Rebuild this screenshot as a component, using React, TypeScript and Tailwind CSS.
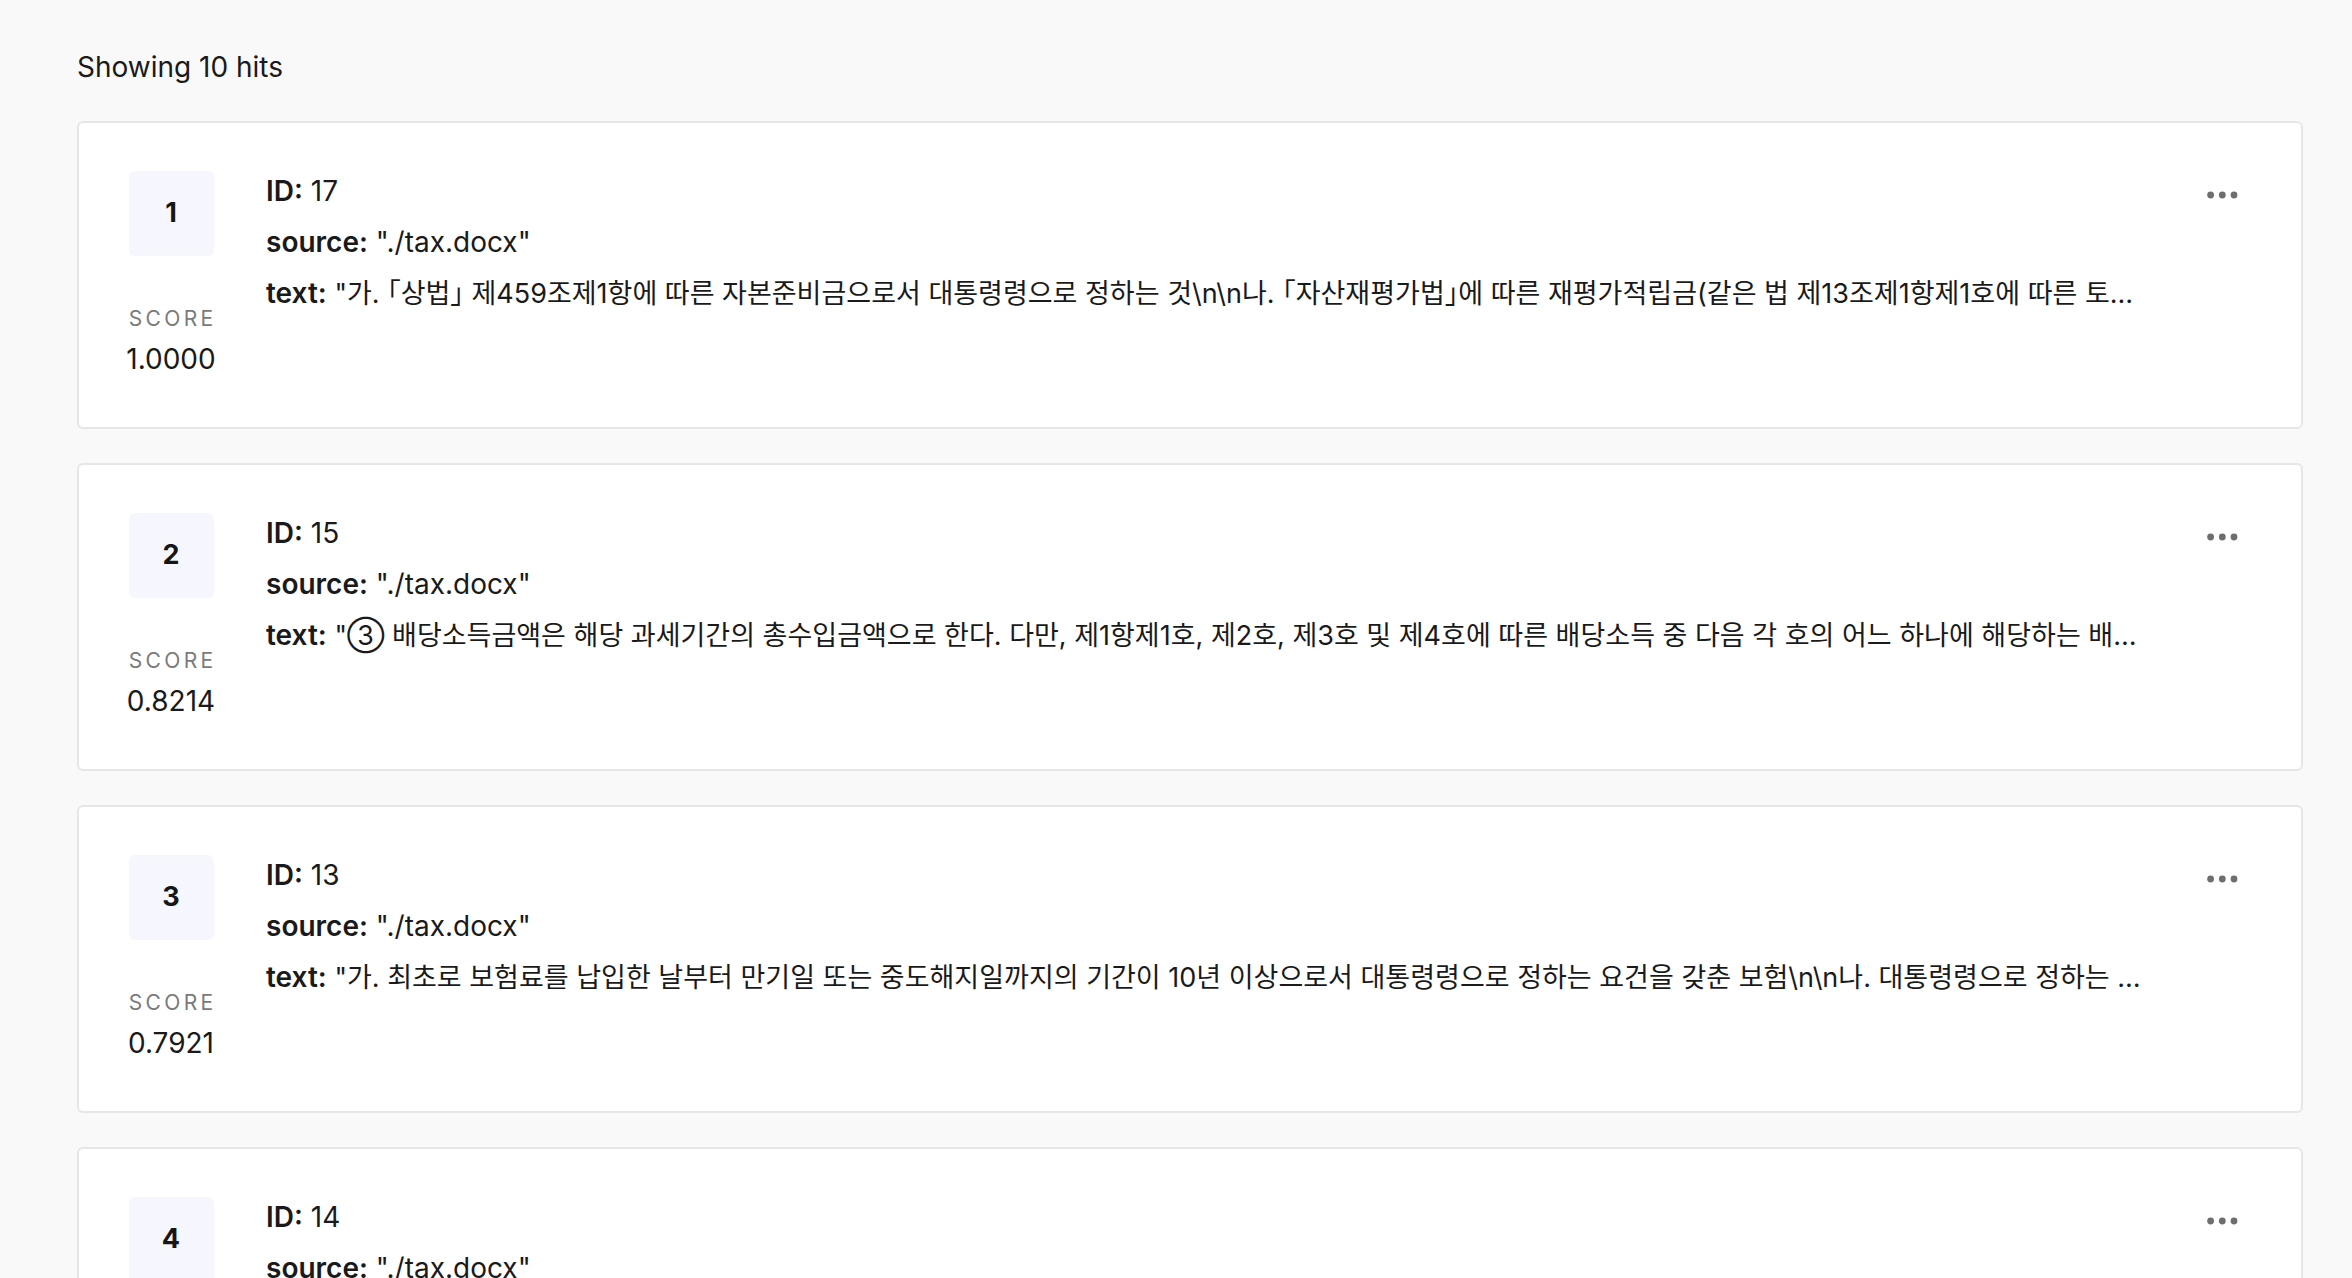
import React from 'react'

type Hit = {
  id: number
  source: string
  text: string
  score: number
}

const hits: Hit[] = [
  {
    id: 17,
    source: './tax.docx',
    text: '가. 「상법」 제459조제1항에 따른 자본준비금으로서 대통령령으로 정하는 것\\n\\n나. 「자산재평가법」에 따른 재평가적립금(같은 법 제13조제1항제1호에 따른 토지의 재평가차액에 상당하는 금액은 제외한다)',
    score: 1.0,
  },
  {
    id: 15,
    source: './tax.docx',
    text: '③ 배당소득금액은 해당 과세기간의 총수입금액으로 한다. 다만, 제1항제1호, 제2호, 제3호 및 제4호에 따른 배당소득 중 다음 각 호의 어느 하나에 해당하는 배당을 제외한 배당소득에 대해서는 해당 과세기간의 총수입금액에 그 배당소득의 100분의 10을 더한 금액으로 한다.',
    score: 0.8214,
  },
  {
    id: 13,
    source: './tax.docx',
    text: '가. 최초로 보험료를 납입한 날부터 만기일 또는 중도해지일까지의 기간이 10년 이상으로서 대통령령으로 정하는 요건을 갖춘 보험\\n\\n나. 대통령령으로 정하는 요건을 갖춘 종신형 연금보험',
    score: 0.7921,
  },
  {
    id: 14,
    source: './tax.docx',
    text: '① 이자소득은 해당 과세기간에 발생한 다음 각 호의 소득으로 한다.\\n\\n1. 국가나 지방자치단체가 발행한 채권 또는 증권의 이자와 할인액\\n\\n2. 내국법인이 발행한 채권 또는 증권의 이자와 할인액',
    score: 0.7736,
  },
  {
    id: 16,
    source: './tax.docx',
    text: '① 배당소득은 해당 과세기간에 발생한 다음 각 호의 소득으로 한다.\\n\\n1. 내국법인으로부터 받는 이익이나 잉여금의 배당 또는 분배금',
    score: 0.7512,
  },
  {
    id: 12,
    source: './tax.docx',
    text: '다. 대통령령으로 정하는 요건을 갖춘 종신형 연금보험 계약으로서 계약자가 보험료 납입 계약기간 만료 후 55세 이후부터 사망시까지 보험금ㆍ수익 등을 연금으로 지급받는 계약',
    score: 0.7288,
  },
  {
    id: 18,
    source: './tax.docx',
    text: '② 제1항제2호에 따른 의제배당(擬制配當)이란 다음 각 호의 금액을 말하며, 이를 해당 주주, 사원, 그 밖의 출자자에게 배당한 것으로 본다.',
    score: 0.7105,
  },
  {
    id: 11,
    source: './tax.docx',
    text: '③ 이자소득금액은 해당 과세기간의 총수입금액으로 하며, 필요경비는 인정하지 아니한다.',
    score: 0.6897,
  },
  {
    id: 19,
    source: './tax.docx',
    text: '1. 주식의 소각이나 자본의 감소로 인하여 주주가 취득하는 금전, 그 밖의 재산의 가액 또는 퇴사ㆍ탈퇴나 출자의 감소로 인하여 사원이나 출자자가 취득하는 금전',
    score: 0.6643,
  },
  {
    id: 10,
    source: './tax.docx',
    text: '제16조(이자소득) ① 이자소득은 해당 과세기간에 발생한 다음 각 호의 소득으로 한다.',
    score: 0.6419,
  },
]

const MoreIcon = () => (
  <svg width="31" height="8" viewBox="0 0 31 8" fill="#6e6e6e" xmlns="http://www.w3.org/2000/svg">
    <circle cx="3.6" cy="4" r="3.4" />
    <circle cx="15.3" cy="4" r="3.4" />
    <circle cx="27" cy="4" r="3.4" />
  </svg>
)

function HitCard({ hit, rank }: { hit: Hit; rank: number }) {
  return (
    <div className="flex gap-[50px] rounded-md border-2 border-[#e6e6e6] bg-white px-[47px] py-[48px]">
      {/* rank + score */}
      <div className="flex w-[90px] shrink-0 flex-col items-center">
        <div className="flex h-[85px] w-[85px] items-center justify-center rounded-md bg-[#f6f6fe] text-[27px] font-bold text-[#161616]">
          {rank}
        </div>
        <div className="mt-[47px] pl-[0.16em] text-[21px] leading-[32px] tracking-[0.16em] text-[#7a7a7a]">SCORE</div>
        <div className="mt-[4px] text-[28px] leading-[40px] text-[#1a1a1a]">{hit.score.toFixed(4)}</div>
      </div>

      {/* fields */}
      <div className="flex min-w-0 flex-1 flex-col gap-[11px] text-[28px] leading-[40px] text-[#1a1a1a]">
        <div>
          <span className="font-semibold">ID:</span> {hit.id}
        </div>
        <div>
          <span className="font-semibold">source:</span> "{hit.source}"
        </div>
        <div className="truncate text-[27px] [font-feature-settings:'halt']">
          <span className="text-[28px] font-semibold">text:</span> "{hit.text}"
        </div>
      </div>

      <button className="flex h-[47px] w-[63px] shrink-0 items-center justify-center" aria-label="More">
        <MoreIcon />
      </button>
    </div>
  )
}

export default function App() {
  return (
    <div className="min-h-screen bg-[#f9f9f9] pl-[77px] pr-[49px] pt-[47px] pb-[60px] font-['Inter','Noto_Sans_CJK_KR',sans-serif]">
      <div className="mb-[34px] text-[28px] leading-[40px] text-[#1a1a1a]">Showing {hits.length} hits</div>
      <div className="flex flex-col gap-[34px]">
        {hits.map((hit, i) => (
          <HitCard key={hit.id} hit={hit} rank={i + 1} />
        ))}
      </div>
    </div>
  )
}
